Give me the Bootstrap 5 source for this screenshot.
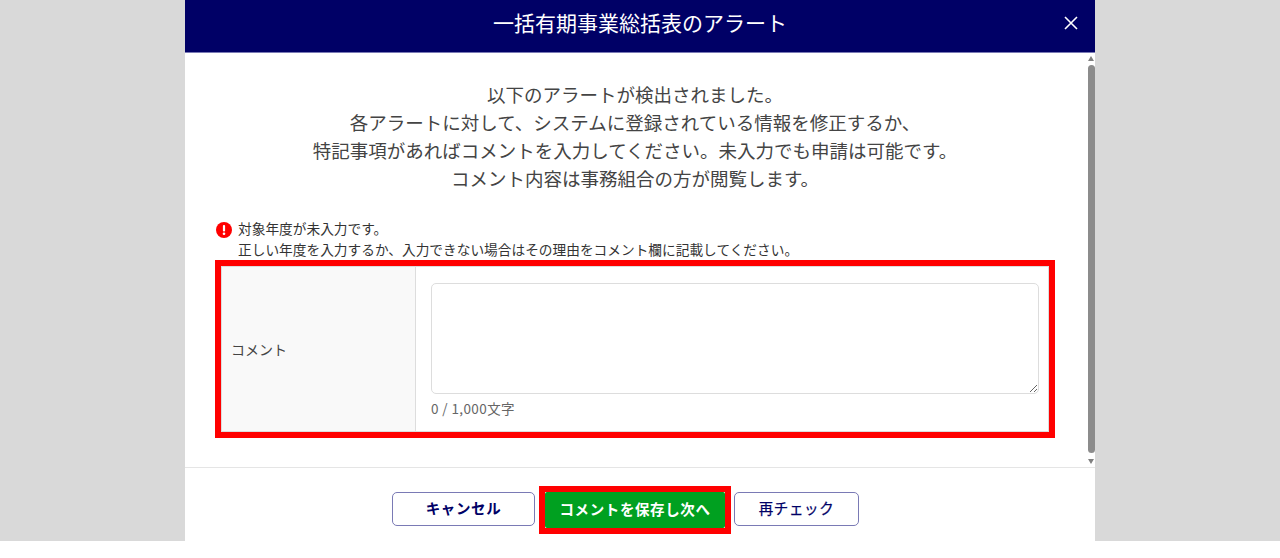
<!DOCTYPE html>
<html lang="ja">
<head>
<meta charset="utf-8">
<link href="https://cdn.jsdelivr.net/npm/bootstrap@5.3.0/dist/css/bootstrap.min.css" rel="stylesheet">
<style>
html,body{height:558px;overflow:hidden;background:#fff;}
body{font-family:"Noto Sans CJK JP","Liberation Sans",sans-serif;color:#333;}
.backdrop{height:541px;background:#d9d9d9;}
.dialog{width:910px;height:541px;background:#fff;}
.dlg-head{height:53px;background:#000066;border-bottom:1px solid #7a7ab5;color:#fff;font-size:21px;padding-bottom:6px;}
.dlg-close{right:15px;top:14px;width:18px;height:18px;background:none;border:0;padding:0;line-height:0;}
.dlg-body{height:414px;padding:27px 40px 0 30px;}
.intro{font-size:18.5px;line-height:28px;color:#444;}
.intro-wrap{height:138px;}
.alert-line{font-size:13.7px;line-height:20.5px;color:#333;margin-bottom:1px;}
.alert-ico{width:16px;height:16px;margin-top:4px;margin-left:1px;margin-right:6px;}
.redbox{border:6px solid #f00;height:178px;width:840px;}
.cmt-grid{border:1px solid #ddd;height:166px;}
.cmt-label{width:194px;background:#f9f9f9;border-right:1px solid #ddd;font-size:14px;color:#444;padding-left:9px;}
.cmt-input{padding:16px 0 0 15px;}
.cmt-area{height:111px;border:1px solid #ddd;border-radius:5px;resize:both;width:608px;display:block;}
.cmt-count{font-size:13.5px;line-height:16px;color:#666;margin-top:6px;letter-spacing:.4px;}
.scroll{right:0;top:53px;width:7px;height:414px;}
.sb-up{top:3px;left:0;border-left:3.5px solid transparent;border-right:3.5px solid transparent;border-bottom:5px solid #808080;}
.sb-down{bottom:3px;left:0;border-left:3.5px solid transparent;border-right:3.5px solid transparent;border-top:5px solid #808080;}
.sb-thumb{top:12px;left:0;width:7px;height:388px;background:#8c8c8c;border-radius:4px;}
.dlg-foot{height:74px;border-top:1px solid #e5e5e5;padding:24px 29px 0 0;}
.act{height:34px;font-size:14.5px;font-weight:700;padding:0 0 2px;border-radius:5px;color:#000066;background:#fff;border:1px solid #7a7ab5;line-height:1;letter-spacing:.6px;}
.act:hover{color:#000066;background:#fff;border-color:#7a7ab5;}
.act-cancel{width:143px;}
.act-re{width:125px;font-weight:400;-webkit-text-stroke:.25px #000066;}
.act-wrap{border:6px solid #f00;height:48px;width:192px;margin:-6px 3px 0 4px;padding:0;}
.act-go{width:180px;height:36px;background:#00a020;color:#fff;border:0;border-radius:2px;}
.act-go:hover{background:#00a020;color:#fff;}
</style>
</head>
<body>
<div class="backdrop d-flex justify-content-center">
  <div class="dialog position-relative d-flex flex-column">
    <div class="dlg-head position-relative d-flex align-items-center justify-content-center">
      <span>一括有期事業総括表のアラート</span>
      <button class="dlg-close position-absolute" type="button" aria-label="閉じる">
        <svg width="18" height="18" viewBox="0 0 18 18"><path d="M3 3 L15 15 M15 3 L3 15" stroke="#fff" stroke-width="1.6" fill="none"/></svg>
      </button>
    </div>
    <div class="dlg-body">
      <div class="intro-wrap intro text-center">
        以下のアラートが検出されました。<br>
        各アラートに対して、システムに登録されている情報を修正するか、<br>
        特記事項があればコメントを入力してください。未入力でも申請は可能です。<br>
        コメント内容は事務組合の方が閲覧します。
      </div>
      <div class="alert-line d-flex">
        <svg class="alert-ico flex-shrink-0" viewBox="0 0 16 16"><circle cx="8" cy="8" r="8" fill="#f00"/><rect x="6.9" y="3" width="2.2" height="6.4" rx="1" fill="#fff"/><circle cx="8" cy="11.8" r="1.3" fill="#fff"/></svg>
        <div>対象年度が未入力です。<br>正しい年度を入力するか、入力できない場合はその理由をコメント欄に記載してください。</div>
      </div>
      <div class="redbox">
        <div class="cmt-grid d-flex">
          <div class="cmt-label d-flex align-items-center flex-shrink-0">コメント</div>
          <div class="cmt-input flex-grow-1">
            <textarea class="cmt-area form-control" aria-label="コメント"></textarea>
            <div class="cmt-count">0 / 1,000文字</div>
          </div>
        </div>
      </div>
    </div>
    <div class="scroll position-absolute">
      <div class="sb-up position-absolute"></div>
      <div class="sb-thumb position-absolute"></div>
      <div class="sb-down position-absolute"></div>
    </div>
    <div class="dlg-foot d-flex justify-content-center align-items-start">
      <button class="btn act act-cancel" type="button">キャンセル</button>
      <div class="act-wrap"><button class="btn act act-go" type="button">コメントを保存し次へ</button></div>
      <button class="btn act act-re" type="button">再チェック</button>
    </div>
  </div>
</div>
<script src="https://cdn.jsdelivr.net/npm/bootstrap@5.3.0/dist/js/bootstrap.bundle.min.js"></script>
</body>
</html>
